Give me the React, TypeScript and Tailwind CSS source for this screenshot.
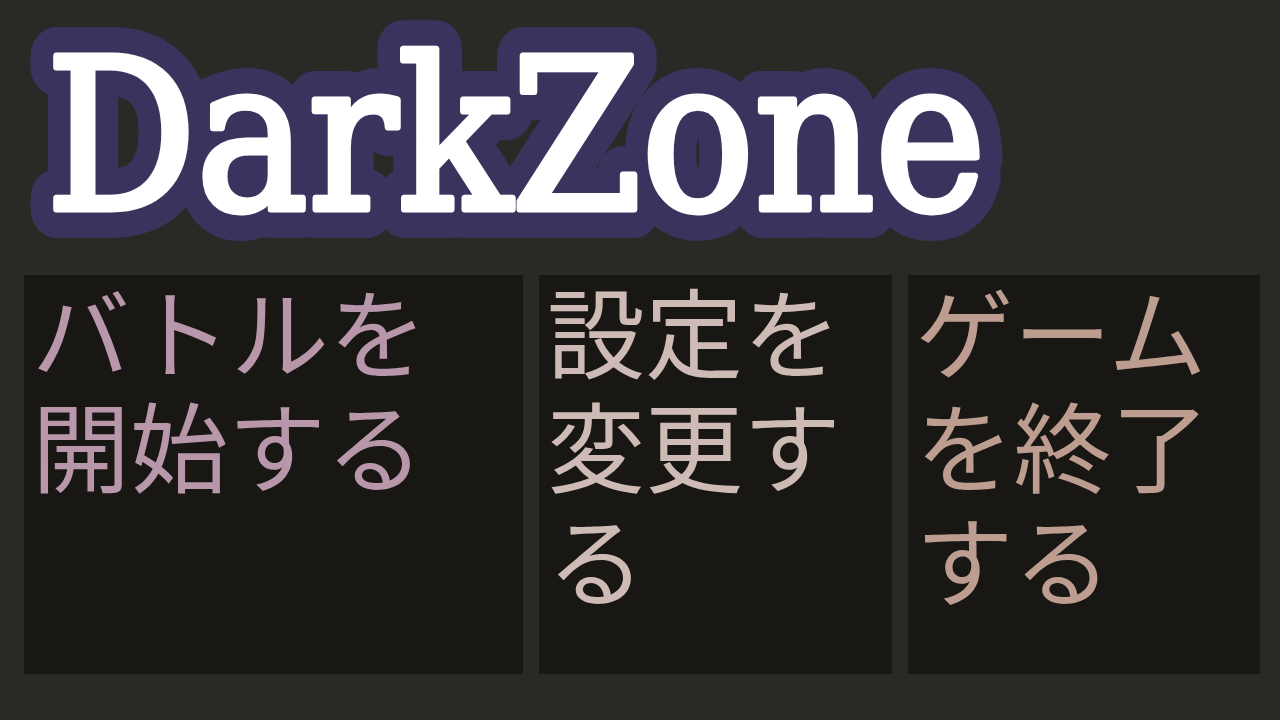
import React from 'react';

const panels = [
  { label: 'バトルを開始する', color: 'text-[#b897ab]', width: 'w-[499px]' },
  { label: '設定を変更する', color: 'text-[#cebbb5]', width: 'flex-1' },
  { label: 'ゲームを終了する', color: 'text-[#bd9d8f]', width: 'flex-1' },
];

function Title() {
  const common = {
    x: 46,
    y: 209,
    fontFamily: "'DejaVu Serif', serif",
    fontWeight: 'normal',
    fontSize: 210,
    textLength: 940,
    lengthAdjust: 'spacingAndGlyphs' as const,
    strokeLinejoin: 'round' as const,
    strokeLinecap: 'round' as const,
  };
  return (
    <svg width="1200" height="260" viewBox="0 0 1200 260" className="block">
      <text {...common} fill="#3a335e" stroke="#3a335e" strokeWidth="58">
        DarkZone
      </text>
      <text {...common} fill="#ffffff" stroke="#ffffff" strokeWidth="7">
        DarkZone
      </text>
    </svg>
  );
}

function MenuPanel({ label, color, width }: { label: string; color: string; width: string }) {
  return (
    <button type="button" className={`${width} h-full bg-[#181713] text-left px-2 flex items-start`}>
      <span className={`${color} -mt-1 [font-family:'Noto_Sans_CJK_JP',sans-serif] text-[98px] leading-[114px]`}>
        {label}
      </span>
    </button>
  );
}

export default function App() {
  return (
    <div className="w-[1280px] h-[720px] bg-[#2a2925] flex flex-col overflow-hidden">
      <header className="h-[275px] overflow-hidden">
        <Title />
      </header>
      <div className="flex gap-4 pl-6 pr-5 h-[399px]">
        {panels.map((p) => (
          <MenuPanel key={p.label} label={p.label} color={p.color} width={p.width} />
        ))}
      </div>
    </div>
  );
}
